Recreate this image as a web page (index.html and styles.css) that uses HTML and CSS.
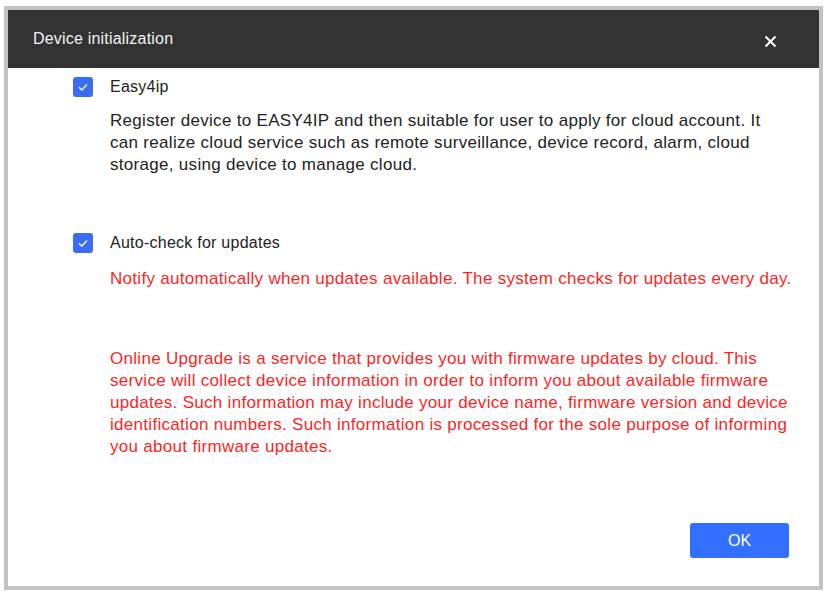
FILE: index.html
```html
<!DOCTYPE html>
<html>
<head>
<meta charset="utf-8">
<link rel="stylesheet" href="styles.css">
</head>
<body>
<div class="dialog">
  <div class="header">
    <span class="title">Device initialization</span>
    <svg class="close" width="13" height="13" viewBox="0 0 13 13"><path d="M1.5 1.5 L11.5 11.5 M11.5 1.5 L1.5 11.5" stroke="#fff" stroke-width="2" fill="none"/></svg>
  </div>
  <div class="content">
    <div class="row first">
      <span class="check"><svg width="20" height="20" viewBox="0 0 20 20"><path d="M6 10.2 L8.8 13 L14 7.5" stroke="#fff" stroke-width="1.3" fill="none"/></svg></span>
      <span class="label">Easy4ip</span>
    </div>
    <p class="desc">Register device to EASY4IP and then suitable for user to apply for cloud account. It can realize cloud service such as remote surveillance, device record, alarm, cloud storage, using device to manage cloud.</p>
    <div class="row second">
      <span class="check"><svg width="20" height="20" viewBox="0 0 20 20"><path d="M6 10.2 L8.8 13 L14 7.5" stroke="#fff" stroke-width="1.3" fill="none"/></svg></span>
      <span class="label">Auto-check for updates</span>
    </div>
    <p class="notice">Notify automatically when updates available. The system checks for updates every day.</p>
    <p class="notice para">Online Upgrade is a service that provides you with firmware updates by cloud. This service will collect device information in order to inform you about available firmware updates. Such information may include your device name, firmware version and device identification numbers. Such information is processed for the sole purpose of informing you about firmware updates.</p>
    <div class="footer">
      <button class="ok">OK</button>
    </div>
  </div>
</div>
</body>
</html>
```
FILE: styles.css
```css
html, body {
  margin: 0;
  padding: 0;
  background: #ffffff;
}
body {
  font-family: "Liberation Sans", Arial, sans-serif;
  color: #222;
}
.dialog {
  box-sizing: border-box;
  margin: 6px 0 0 4px;
  width: 819px;
  height: 584px;
  border: 4px solid #c2c2c2;
  display: flex;
  flex-direction: column;
  background: #fff;
}
.header {
  height: 58px;
  background: #333333;
  display: flex;
  align-items: center;
  justify-content: space-between;
  padding: 0 42px 0 25px;
  flex-shrink: 0;
}
.title {
  color: #f2f2f2;
  font-size: 16px;
  letter-spacing: 0.2px;
}
.close {
  display: block;
  position: relative;
  top: 2px;
}
.content {
  flex: 1;
  display: flex;
  flex-direction: column;
  padding: 8px 26px 28px 65px;
}
.row {
  display: flex;
  align-items: center;
  height: 22px;
}
.row.second {
  margin-top: 56px;
}
.check {
  width: 20px;
  height: 20px;
  border-radius: 3px;
  background: #3a6cf4;
  display: block;
  flex-shrink: 0;
}
.check svg {
  display: block;
}
.label {
  margin-left: 17px;
  font-size: 16px;
  letter-spacing: 0.25px;
  color: #222;
}
.desc {
  margin: 12px 0 0 37px;
  font-size: 17px;
  letter-spacing: 0.3px;
  line-height: 22px;
  color: #222;
}
.notice {
  margin: 14px 0 0 37px;
  font-size: 17px;
  letter-spacing: 0.3px;
  line-height: 22px;
  color: #ff1f1f;
}
.notice.para {
  margin-top: 58px;
}
.footer {
  margin-top: auto;
  display: flex;
  justify-content: flex-end;
  margin-right: 4px;
}
.ok {
  width: 99px;
  height: 35px;
  border: none;
  border-radius: 3px;
  background: #3370ff;
  color: #fff;
  font-family: "Liberation Sans", Arial, sans-serif;
  font-size: 16px;
  padding: 0;
}
```
